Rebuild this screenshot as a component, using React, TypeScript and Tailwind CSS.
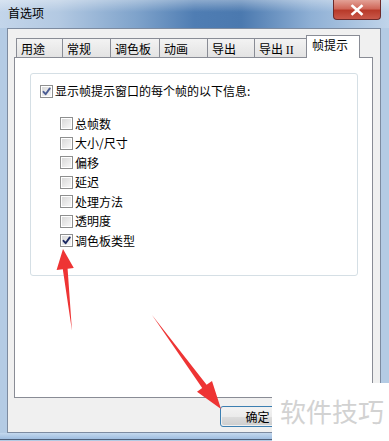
import React from "react";

const CJK = { fontFamily: '"Noto Sans CJK SC", "Noto Sans", sans-serif' };

function Box({ checked, light }: { checked?: boolean; light?: boolean }) {
  return (
    <div className="w-[13px] h-[13px] border border-[#8e8f8f] bg-white p-px shrink-0">
      <div className="w-full h-full bg-gradient-to-br from-[#d9d9d9] to-[#f7f7f7] relative">
        {checked && (
          <svg viewBox="0 0 11 11" className="absolute inset-0 w-[11px] h-[11px] -m-px">
            <path
              d="M2.5 5.8 L4.6 8.2 L8.8 2.4"
              fill="none"
              stroke={light ? "#4b5d94" : "#1d2b63"}
              strokeWidth="1.9"
              strokeLinecap="round"
              strokeLinejoin="round"
            />
          </svg>
        )}
      </div>
    </div>
  );
}

const tabs = [
  { t: "用途", w: 47 },
  { t: "常规", w: 48 },
  { t: "调色板", w: 49 },
  { t: "动画", w: 48 },
  { t: "导出", w: 47 },
  { t: "导出 II", w: 53 },
];

const items = [
  { t: "总帧数" },
  { t: "大小/尺寸" },
  { t: "偏移" },
  { t: "延迟" },
  { t: "处理方法" },
  { t: "透明度" },
  { t: "调色板类型", c: true },
];

export default function App() {
  return (
    <div
      className="w-[389px] h-[441px] relative overflow-hidden bg-[#b4cbe4] text-black text-[12px]"
      style={CJK}
    >
      {/* title bar */}
      <div className="h-[28px] relative bg-[linear-gradient(to_right,#c3d5ea_0%,#b3c9e2_15%,#7fa3cb_35%,#4f7db3_50%,#4b79af_62%,#8fb0d5_80%,#c0d4ea_100%)]">
        <div className="absolute inset-x-0 top-0 h-[12px] bg-[linear-gradient(to_bottom,rgba(255,255,255,0.35),rgba(255,255,255,0))]" />
        <div className="absolute left-[8px] top-[5px] text-[12px] leading-[16px] text-black">首选项</div>
        <div className="absolute left-[333px] top-0 w-[48px] h-[20px] rounded-b-[4px] border border-t-0 border-[#6d2a2a] bg-[linear-gradient(to_bottom,#e3a196_0%,#d0685a_45%,#b83a2a_55%,#c9584a_100%)] flex items-center justify-center">
          <svg viewBox="0 0 14 12" className="w-[14px] h-[12px]">
            <path d="M2.5 2 L11.5 10 M11.5 2 L2.5 10" stroke="#ffffff" strokeWidth="2.6" strokeLinecap="square" />
          </svg>
        </div>
      </div>

      {/* client */}
      <div className="ml-[7px] mr-[8px] h-[405px] bg-[#f0f0f0] border border-[#7d8ba0] flex flex-col">
        {/* tabs */}
        <div className="flex items-end h-[22px] mt-[6px] ml-[8px]">
          {tabs.map((tb, i) => (
            <div
              key={i}
              className={
                "h-[19px] border border-b-0 border-[#898c95] bg-gradient-to-b from-[#f3f3f3] to-[#e3e3e3] pl-[4px] leading-[19px] " +
                (i > 0 ? "-ml-px" : "")
              }
              style={{ width: tb.w + (i > 0 ? 1 : 0) }}
            >
              {tb.t === "导出 II" ? (
                <span>
                  导出 <span style={{ fontFamily: '"Liberation Serif", serif' }}>II</span>
                </span>
              ) : (
                tb.t
              )}
            </div>
          ))}
          <div className="h-[23px] w-[54px] -ml-[2px] border border-b-0 border-[#898c95] bg-white pl-[5px] leading-[18px] relative z-10 -mb-px">
            帧提示
          </div>
        </div>
        {/* panel */}
        <div className="ml-[6px] mr-[7px] h-[341px] border border-[#898c95] bg-white pt-[15px] pl-[15px]">
          <div className="w-[328px] h-[203px] rounded-[3px] border border-[#d5dfe5] pl-[9px] pt-[10px]">
            <div className="flex items-center h-[14px] gap-[2px]">
              <Box checked light />
              <span className="leading-[14px]">显示帧提示窗口的每个帧的以下信息:</span>
            </div>
            <div className="pl-[20px] pt-[16px]">
              {items.map((it, i) => (
                <div key={i} className="flex items-center h-[19.5px] gap-[2px]">
                  <Box checked={it.c} />
                  <span className="leading-[14px]">{it.t}</span>
                </div>
              ))}
            </div>
          </div>
        </div>
        {/* buttons */}
        <div className="flex pl-[212px] pt-[8px]">
          <div className="w-[75px] h-[21px] rounded-[3px] border border-[#3c7fb1] p-px">
            <div className="w-full h-full rounded-[2px] bg-[linear-gradient(to_bottom,#f2f2f2_0%,#ebebeb_50%,#dddddd_51%,#cfcfcf_100%)] flex items-center justify-center leading-[15px]">
              确定
            </div>
          </div>
        </div>
      </div>
      <div className="h-[7px] border-b border-[#4d5f7a] bg-[linear-gradient(to_bottom,#c4d8ee,#9fbde0)]" />

      {/* watermark */}
      <div className="absolute left-[272px] top-[383px] w-[117px] h-[58px] bg-white pl-[8px] pt-[11px]">
        <span className="text-[26px] leading-[34px] text-[#d2d2d2] whitespace-nowrap">软件技巧</span>
      </div>

      {/* arrows */}
      <svg className="absolute inset-0 pointer-events-none" width="389" height="441" viewBox="0 0 389 441">
        <polygon
          points="72,331 67.6,268.7 73.8,268 63,249 56.6,270 62.8,269.3"
          fill="#ee3434"
        />
        <polygon
          points="152,315 206.6,384.7 212,381 221,409 197,391.7 202.2,388"
          fill="#ee3434"
        />
      </svg>
    </div>
  );
}
